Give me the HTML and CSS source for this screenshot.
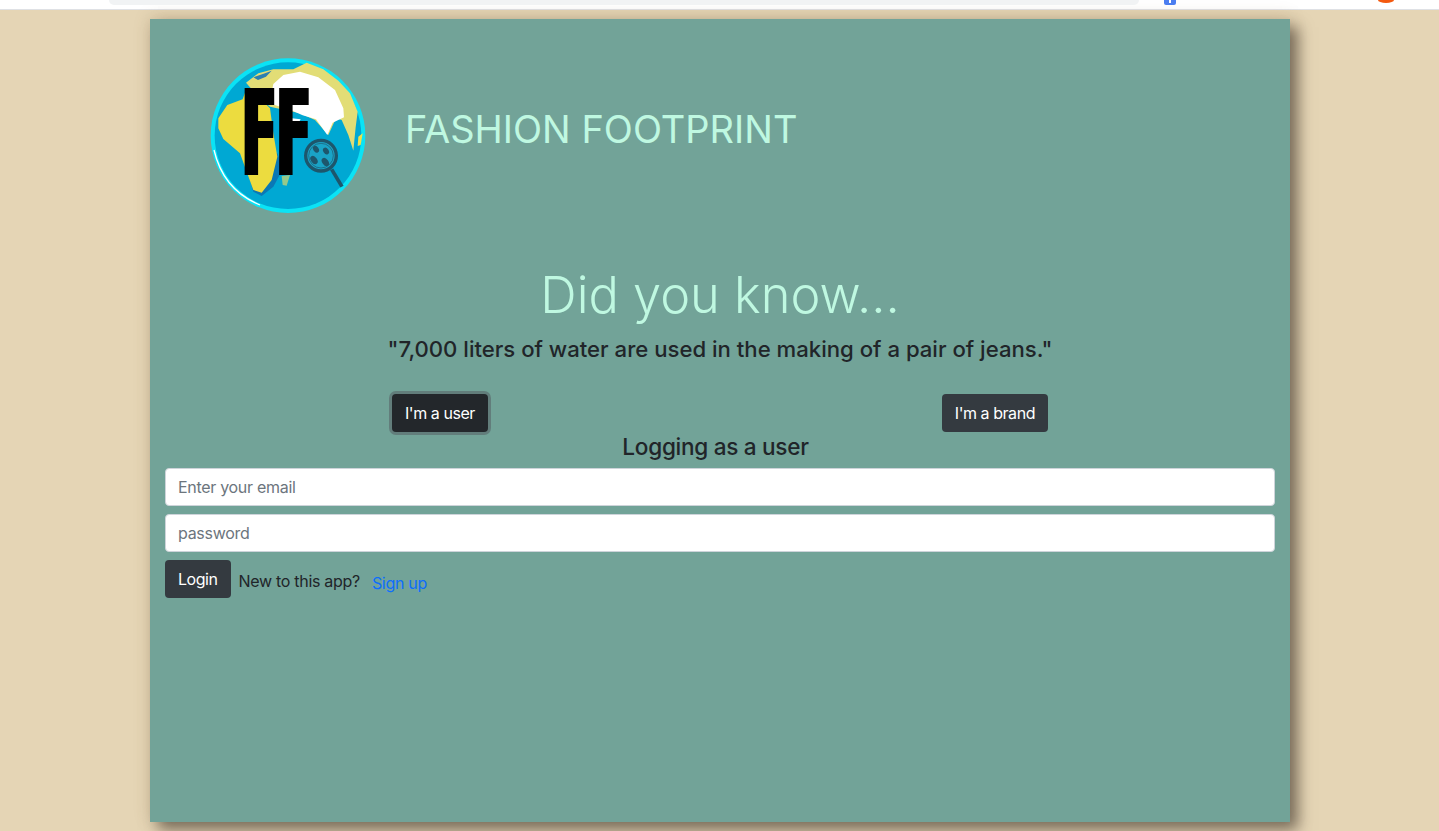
FILE: index.html
```html
<!DOCTYPE html>
<html lang="en">
<head>
    <meta charset="UTF-8">
    <meta name="viewport" content="width=device-width, initial-scale=1.0">
    <title>Fashion Footprint</title>
    <link rel="stylesheet" href="styles.css">
</head>
<body>

    <!-- Sliver of the browser toolbar at the top of the shot -->
    <div class="toolbar">
        <div class="address-bar"></div>
        <div class="ext-blue"></div>
        <div class="ext-orange"></div>
    </div>

    <div class="card">
        <!-- Header -->
        <div class="header">
            <svg class="logo" viewBox="0 0 600 570" width="200" height="190">
                <defs>
                    <filter id="fatten" x="-10%" y="-10%" width="120%" height="120%">
                        <feMorphology operator="dilate" radius="7 0.01"/>
                    </filter>
                </defs>
                <circle cx="294" cy="287" r="232" fill="#0be3f5"/>
                <circle cx="294" cy="287" r="220" fill="#00a8d3"/>
                <!-- asia -->
                <path fill="#e2dd76" d="M168 128 L205 100 L250 88 L310 88 L350 68 L400 88 L445 122 L480 160 L503 215 L497 262 L490 332 L475 285 L455 240 L438 235 L415 285 L375 240 L330 220 L240 200 L205 170 Z"/>
                <path fill="#2b7fb0" d="M190 112 L225 100 L245 92 L228 110 L204 120 Z"/>
                <path fill="#ffffff" d="M250 132 L280 105 L330 95 L385 112 L435 150 L460 205 L462 232 L428 248 L412 285 L378 238 L338 226 L302 210 L238 190 Z"/>
                <path fill="#ffffff" d="M305 235 L332 238 L325 250 L302 248 Z"/>
                <!-- africa -->
                <path fill="#0a78b5" d="M160 345 L190 455 L215 468 L250 440 L280 385 L262 340 Z"/>
                <path fill="#ecdc3f" d="M85 235 L112 195 L158 178 L168 150 L205 170 L240 205 L250 280 L262 350 L245 420 L215 458 L190 450 L170 395 L150 340 L100 297 L85 265 Z"/>
                <path fill="#96c98a" d="M275 408 L300 405 L290 437 L278 435 Z"/>
                <path fill="#f0e04a" d="M505 290 L518 280 L512 315 L503 318 Z"/>
                <path fill="none" stroke="#ffffff" stroke-width="4" d="M72 330 Q100 450 210 495"/>
                <!-- FF -->
                <g filter="url(#fatten)">
                    <text class="logo-ff" transform="translate(156 405) scale(0.42 1)">FF</text>
                </g>
                <!-- magnifier over footprints -->
                <circle cx="393" cy="347" r="46" fill="#1aa3c6" stroke="#1d566c" stroke-width="10"/>
                <circle cx="393" cy="347" r="37" fill="none" stroke="#1d566c" stroke-width="2"/>
                <ellipse cx="372" cy="360" rx="9" ry="14" fill="#1d566c" transform="rotate(-35 372 360)"/>
                <ellipse cx="378" cy="328" rx="8" ry="11" fill="#1d566c" transform="rotate(-35 378 328)"/>
                <ellipse cx="406" cy="366" rx="9" ry="14" fill="#1d566c" transform="rotate(-35 406 366)"/>
                <ellipse cx="408" cy="333" rx="8" ry="11" fill="#1d566c" transform="rotate(-35 408 333)"/>
                <path d="M425 388 L456 440" stroke="#1d566c" stroke-width="11" fill="none"/>
            </svg>
            <h1 class="brand-title">FASHION FOOTPRINT</h1>
        </div>

        <!-- Fact -->
        <h2 class="fact-title">Did you know...</h2>
        <p class="fact-quote">"7,000 liters of water are used in the making of a pair of jeans."</p>

        <!-- Role switch -->
        <div class="role-row">
            <button class="btn btn-active" type="button">I'm a user</button>
            <button class="btn" type="button">I'm a brand</button>
        </div>

        <!-- Login Form -->
        <form class="login-form">
            <h3 class="form-title">Logging as a user</h3>
            <input class="field" type="email" placeholder="Enter your email">
            <input class="field" type="password" placeholder="password">
            <div class="form-footer">
                <button class="btn" type="submit">Login</button>
                <span class="new-text">New to this app?</span>
                <a class="signup-link" href="#">Sign up</a>
            </div>
        </form>
    </div>

</body>
</html>
```

FILE: styles.css
```css
* {
    box-sizing: border-box;
}
html, body {
    height: 100%;
}
body {
    margin: 0;
    overflow: hidden;
    font-family: Inter, "Noto Sans", sans-serif;
    font-size: 16px;
    line-height: 1.5;
    letter-spacing: -0.3px;
    color: #212529;
    background-color: #e5d5b5;
}
.toolbar {
    display: flex;
    height: 10px;
    background-color: #fff;
    border-bottom: 1px solid #dfe1e5;
}
.address-bar {
    width: 1030px;
    height: 5px;
    margin-left: 109px;
    background-color: #f1f3f4;
    border-radius: 0 0 8px 8px;
}
.ext-blue {
    position: relative;
    width: 12px;
    height: 5px;
    margin-left: 25px;
    background-color: #4a7df0;
    border-radius: 0 0 2px 2px;
}
.ext-blue::after {
    content: "";
    position: absolute;
    left: 5px;
    top: 0;
    width: 2px;
    height: 3px;
    background-color: #fff;
}
.ext-orange {
    width: 16px;
    height: 3px;
    margin-left: 202px;
    background-color: #f4590f;
    border-radius: 0 0 50% 50% / 0 0 100% 100%;
}
.card {
    width: 1140px;
    height: 803px;
    margin: 9px 0 0 150px;
    background-color: #72a398;
    box-shadow: 8px 8px 14px rgba(60, 50, 40, 0.62), 0 -2px 16px rgba(120, 90, 50, 0.18);
}
.header {
    display: flex;
    align-items: center;
    padding: 21px 0 0 40px;
}
.logo {
    flex-shrink: 0;
}
.logo-ff {
    font-family: "DejaVu Sans", sans-serif;
    font-weight: bold;
    font-size: 360px;
    letter-spacing: 0;
    fill: #000;
}
.brand-title {
    margin: -10px 0 0 15px;
    font-size: 38px;
    font-weight: 400;
    line-height: 1.2;
    letter-spacing: 0;
    color: #bff8e1;
}
.fact-title {
    margin: 34px 0 0;
    font-size: 50.5px;
    font-weight: 350;
    line-height: 61px;
    letter-spacing: 0;
    text-align: center;
    color: #bff8e1;
}
.fact-quote {
    margin: 7px 0 0;
    font-size: 22.15px;
    font-weight: 450;
    line-height: 34px;
    letter-spacing: 0;
    text-align: center;
}
.role-row {
    display: flex;
    justify-content: space-between;
    width: 656px;
    margin: 28px 0 0 242px;
}
.btn {
    height: 38px;
    padding: 0 13px;
    font-family: inherit;
    font-size: 16px;
    letter-spacing: -0.45px;
    color: #fff;
    background-color: #343a40;
    border: none;
    border-radius: 4px;
}
.btn-active {
    background-color: #23272b;
    box-shadow: 0 0 0 3px rgba(82, 88, 93, 0.5);
}
.login-form {
    padding: 0 15px;
}
.form-title {
    margin: 0 9px 6px 0;
    font-size: 22.6px;
    font-weight: 450;
    line-height: 30px;
    text-align: center;
}
.field {
    display: block;
    width: 100%;
    height: 38px;
    margin-bottom: 8px;
    padding: 6px 12px;
    font-family: inherit;
    font-size: 16px;
    letter-spacing: inherit;
    color: #495057;
    background-color: #fff;
    border: 1px solid #ced4da;
    border-radius: 4px;
}
.field::placeholder {
    color: #6c757d;
}
.form-footer {
    display: flex;
    align-items: center;
}
.new-text {
    margin: 4px 0 0 8px;
}
.signup-link {
    margin: 8px 0 0 12px;
    color: #0d6efd;
    text-decoration: none;
}
```
